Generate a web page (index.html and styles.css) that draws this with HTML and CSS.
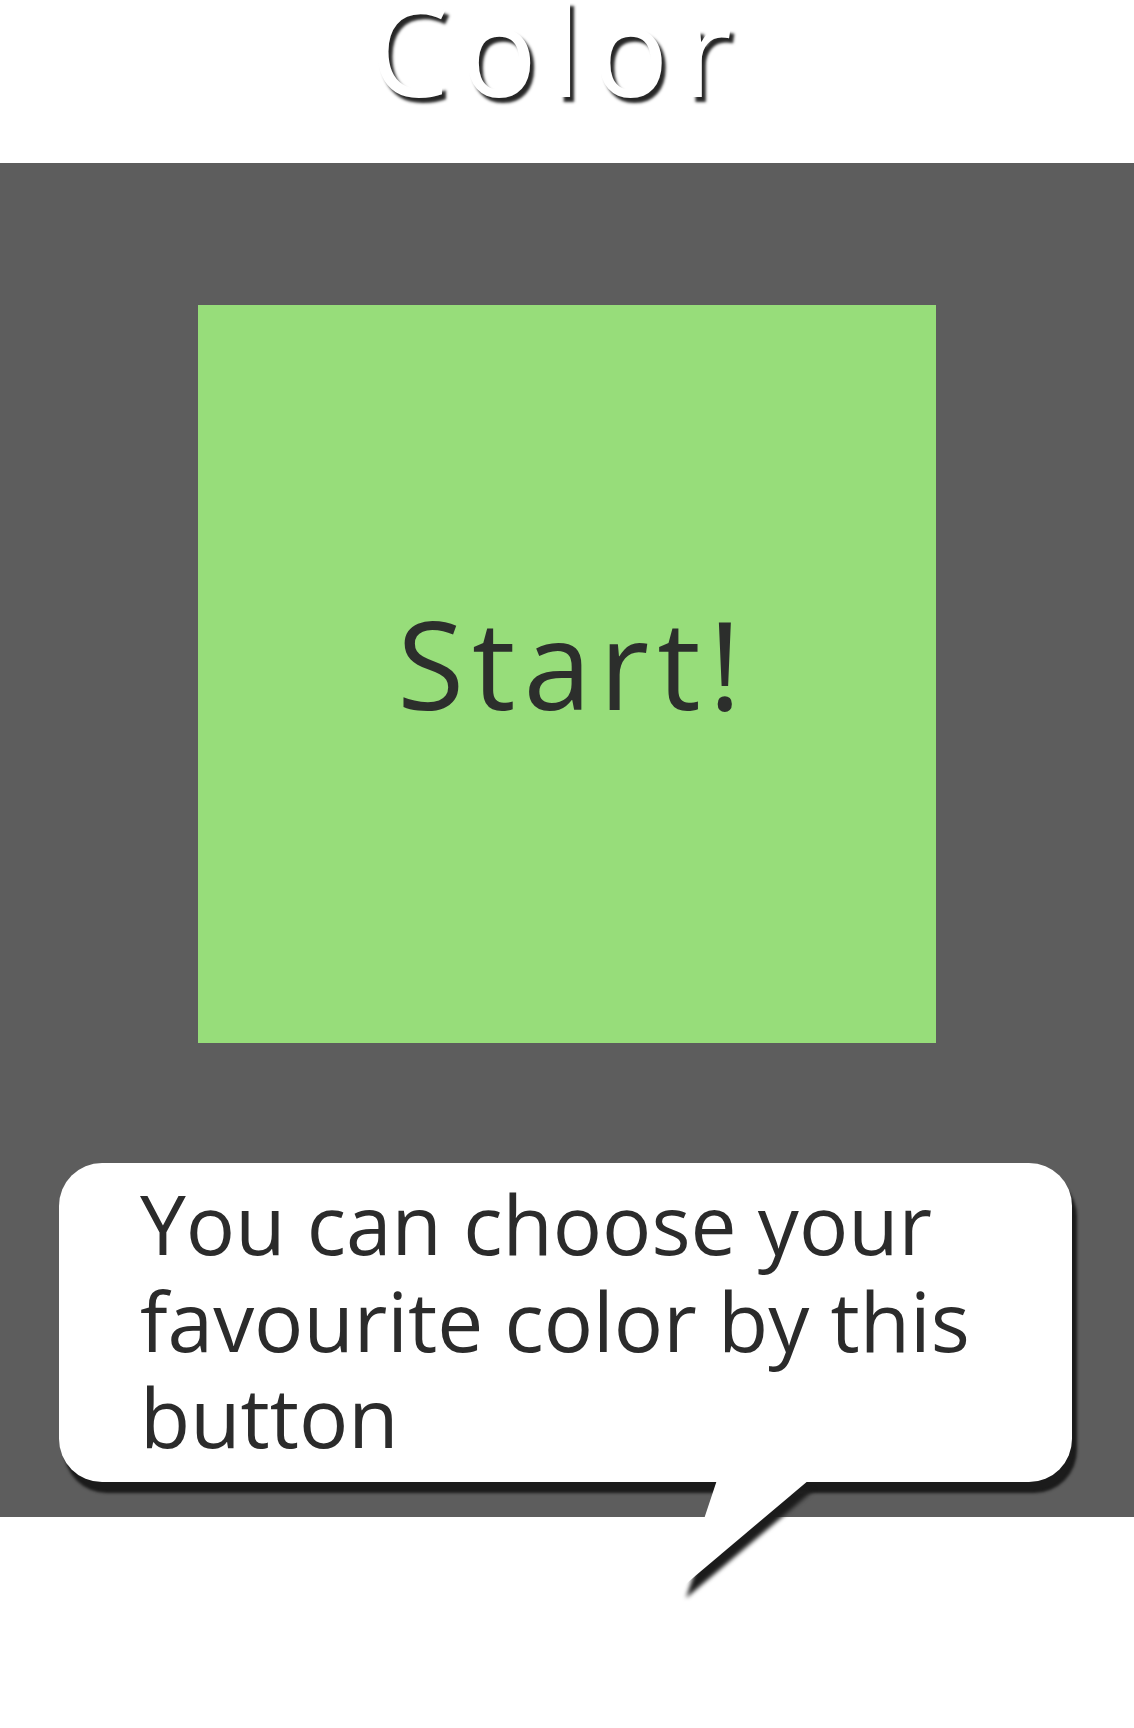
FILE: index.html
```html
<!DOCTYPE html>
<html>
<head>
<meta charset="utf-8">
<link rel="stylesheet" href="styles.css">
</head>
<body>
<header class="header">
  <h1 class="title">Color</h1>
</header>
<main class="stage">
  <button class="start">Start!</button>
  <div class="bubble">
    <p class="bubble-text">You can choose your favourite color by this button</p>
    <svg class="tail" width="140" height="112" viewBox="0 0 140 112">
      <polygon points="36,0 128,0 0,108" fill="#ffffff"/>
    </svg>
  </div>
</main>
</body>
</html>
```
FILE: styles.css
```css
html, body {
  margin: 0;
  padding: 0;
  background: #ffffff;
}
body {
  width: 1134px;
  height: 1728px;
  font-family: "Open Sans", "Noto Sans", sans-serif;
  overflow: hidden;
}
.header {
  height: 163px;
  display: flex;
  justify-content: center;
  align-items: flex-start;
}
.title {
  margin: 0;
  padding-right: 20px;
  font-weight: 400;
  font-size: 126px;
  line-height: 96px;
  letter-spacing: 12px;
  color: #ffffff;
  text-shadow: 4px 5px 3px rgba(0, 0, 0, 0.85);
}
.stage {
  background: #5d5d5d;
  height: 1354px;
  display: flex;
  flex-direction: column;
  align-items: flex-start;
}
.start {
  align-self: center;
  margin-top: 142px;
  width: 738px;
  height: 738px;
  border: 0;
  padding: 0 0 22px 12px;
  background: #97dd7a;
  color: #2c2e2c;
  font-family: "Open Sans", "Noto Sans", sans-serif;
  font-size: 122px;
  letter-spacing: 8px;
}
.bubble {
  position: relative;
  margin-top: 120px;
  margin-left: 59px;
  width: 1013px;
  height: 319px;
  box-sizing: border-box;
  background: #ffffff;
  border-radius: 43px;
  box-shadow: 5px 11px 3px #1b1b1b;
  padding: 0 60px 0 81px;
}
.bubble-text {
  margin: 0;
  margin-top: 12px;
  font-size: 82px;
  line-height: 96.5px;
  color: #2b2b2b;
}
.tail {
  position: absolute;
  left: 622px;
  top: 317px;
  filter: drop-shadow(5px 10px 2px #1b1b1b);
  overflow: visible;
}
```
